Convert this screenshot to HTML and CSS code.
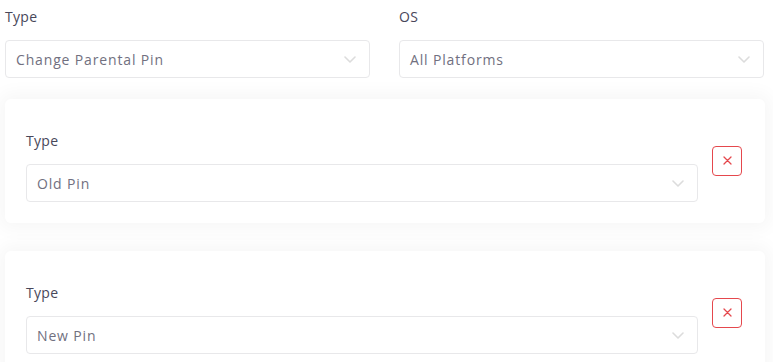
FILE: index.html
```html
<!DOCTYPE html>
<html>
<head>
<meta charset="utf-8">
<link rel="stylesheet" href="styles.css">
</head>
<body>
<div class="page">
  <div class="top-row">
    <div class="field">
      <div class="label">Type</div>
      <div class="select"><span>Change Parental Pin</span><svg class="chev" width="12" height="7" viewBox="0 0 12 7"><path d="M1 1l5 5 5-5" fill="none" stroke="#dcdcdc" stroke-width="1.6" stroke-linecap="round" stroke-linejoin="round"/></svg></div>
    </div>
    <div class="field">
      <div class="label">OS</div>
      <div class="select"><span>All Platforms</span><svg class="chev" width="12" height="7" viewBox="0 0 12 7"><path d="M1 1l5 5 5-5" fill="none" stroke="#dcdcdc" stroke-width="1.6" stroke-linecap="round" stroke-linejoin="round"/></svg></div>
    </div>
  </div>
  <div class="card">
    <div class="field grow">
      <div class="label">Type</div>
      <div class="select"><span>Old Pin</span><svg class="chev" width="12" height="7" viewBox="0 0 12 7"><path d="M1 1l5 5 5-5" fill="none" stroke="#dcdcdc" stroke-width="1.6" stroke-linecap="round" stroke-linejoin="round"/></svg></div>
    </div>
    <button class="del"><svg width="9" height="9" viewBox="0 0 9 9"><path d="M1 1l7 7M8 1l-7 7" stroke="#e5484d" stroke-width="1.3" stroke-linecap="round"/></svg></button>
  </div>
  <div class="card">
    <div class="field grow">
      <div class="label">Type</div>
      <div class="select"><span>New Pin</span><svg class="chev" width="12" height="7" viewBox="0 0 12 7"><path d="M1 1l5 5 5-5" fill="none" stroke="#dcdcdc" stroke-width="1.6" stroke-linecap="round" stroke-linejoin="round"/></svg></div>
    </div>
    <button class="del"><svg width="9" height="9" viewBox="0 0 9 9"><path d="M1 1l7 7M8 1l-7 7" stroke="#e5484d" stroke-width="1.3" stroke-linecap="round"/></svg></button>
  </div>
</div>
</body>
</html>
```
FILE: styles.css
```css
html, body {
  margin: 0;
  padding: 0;
  background: #ffffff;
  font-family: "Open Sans", "Noto Sans", sans-serif;
  overflow: hidden;
}
.page {
  padding: 7px 8px 0 5px;
  display: flex;
  flex-direction: column;
  gap: 28px;
}
.top-row {
  display: grid;
  grid-template-columns: 365px 365px;
  column-gap: 29px;
  margin-bottom: -7px;
}
.field {
  display: flex;
  flex-direction: column;
}
.grow {
  flex: 1;
}
.label {
  font-size: 14px;
  line-height: 20px;
  color: #48475a;
  letter-spacing: 0.3px;
  margin-bottom: 13px;
}
.select {
  height: 38px;
  box-sizing: border-box;
  border: 1px solid #e8e8ea;
  border-radius: 4px;
  background: #fff;
  display: flex;
  align-items: center;
  justify-content: space-between;
  padding: 0 13px 0 10px;
  font-size: 14px;
  color: #717080;
  letter-spacing: 0.85px;
}
.card {
  background: #fff;
  border-radius: 6px;
  box-shadow: 0 0 18px 6px rgba(0, 0, 0, 0.035);
  padding: 32px 23px 21px 21px;
  display: flex;
  align-items: center;
  gap: 14px;
}
.del {
  width: 30px;
  height: 30px;
  border: 1px solid #e5484d;
  border-radius: 4px;
  background: #fff;
  display: flex;
  align-items: center;
  justify-content: center;
  padding: 0;
  margin-top: -12px;
}
```
